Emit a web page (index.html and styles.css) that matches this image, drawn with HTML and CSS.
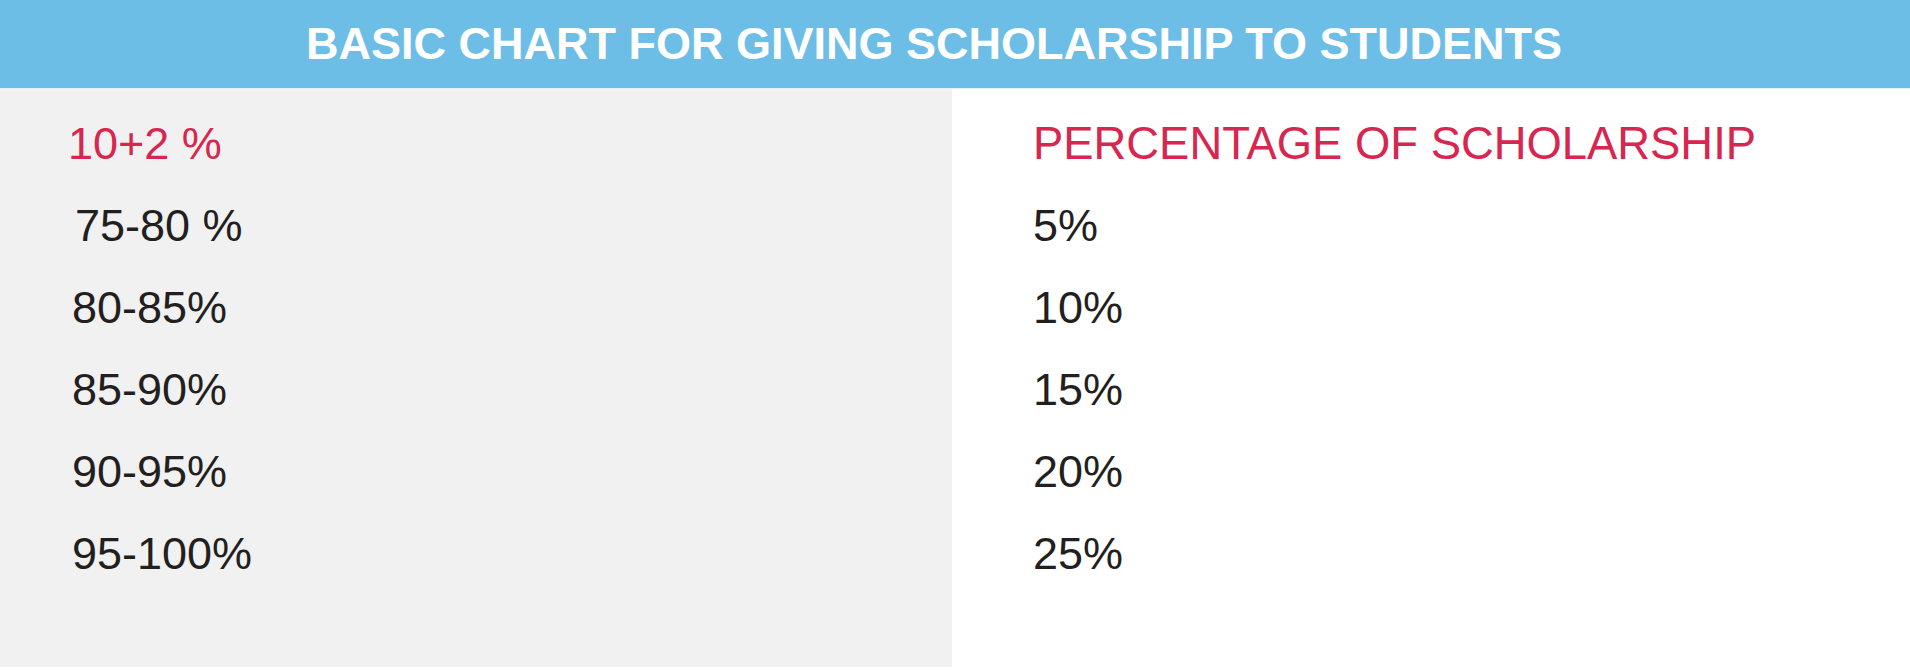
FILE: index.html
```html
<!DOCTYPE html>
<html lang="en">
<head>
    <meta charset="UTF-8">
    <meta name="viewport" content="width=device-width, initial-scale=1.0">
    <title>Scholarship Chart</title>
    <link rel="stylesheet" href="styles.css">
</head>
<body>

<div class="chart">
    <div class="chart-title">BASIC CHART FOR GIVING SCHOLARSHIP TO STUDENTS</div>

    <div class="columns">
        <div class="col col-marks">
            <div class="cell head">10+2 %</div>
            <div class="cell indent">75-80 %</div>
            <div class="cell">80-85%</div>
            <div class="cell">85-90%</div>
            <div class="cell">90-95%</div>
            <div class="cell">95-100%</div>
        </div>
        <div class="col col-percent">
            <div class="cell head">PERCENTAGE OF SCHOLARSHIP</div>
            <div class="cell">5%</div>
            <div class="cell">10%</div>
            <div class="cell">15%</div>
            <div class="cell">20%</div>
            <div class="cell">25%</div>
        </div>
    </div>
</div>

</body>
</html>
```

FILE: styles.css
```css
/* chart layout */
body {
    margin: 0;
    background-color: #fff;
    font-family: "Liberation Sans", Arial, sans-serif;
}
.chart {
    width: 1910px;
    height: 670px;
}
.chart-title {
    height: 88px;
    line-height: 88px;
    padding-left: 306px;
    background-color: #6dbee6;
    border-bottom: 1px solid #dff3fb;
    color: #fff;
    font-size: 45px;
    font-weight: bold;
    white-space: nowrap;
}
.columns {
    display: flex;
}
.col {
    height: 564px;
    padding-top: 14px;
}
.col-marks {
    width: 880px;
    padding-left: 72px;
    background-color: #f1f1f1;
}
.col-percent {
    flex: 1;
    padding-left: 81px;
}
.cell {
    height: 82px;
    line-height: 82px;
    font-size: 45px;
    color: #231f20;
    white-space: nowrap;
}
.cell.head {
    color: #d7264f;
}
.col-marks .head {
    margin-left: -4px;
}
.col-percent .head {
    margin-left: 0;
    font-size: 45.4px;
}
.indent {
    margin-left: 3px;
}
```
